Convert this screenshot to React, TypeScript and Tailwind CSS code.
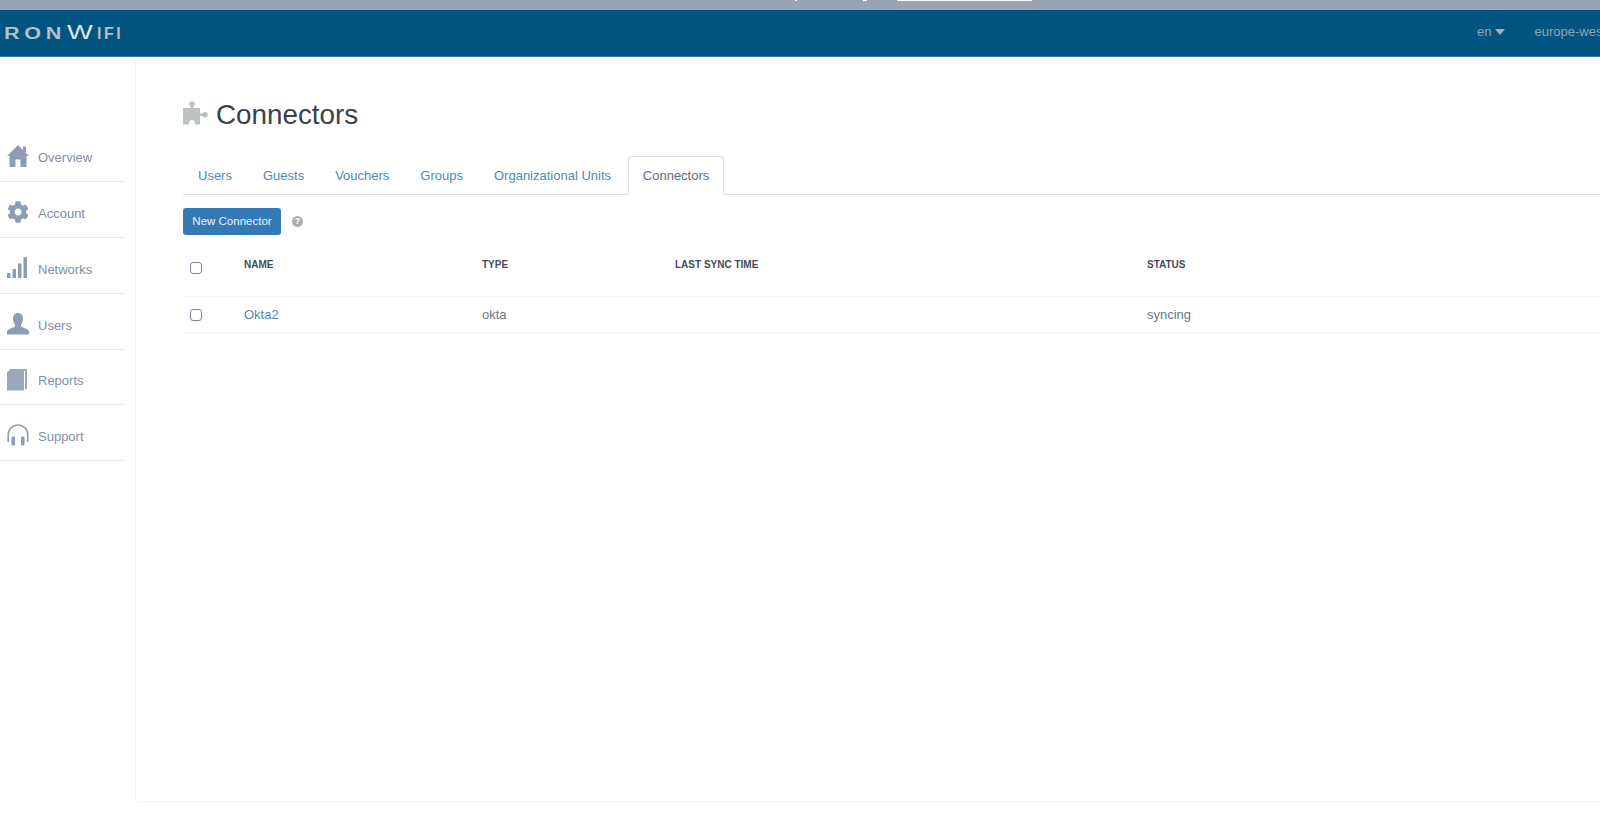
import React from "react";
import { FaCog } from "react-icons/fa";

const font = { fontFamily: '"Liberation Sans", Arial, sans-serif' };

function Home() {
  return (
    <svg viewBox="0 0 22 22" className="h-[22px] w-[22px]" fill="#8e9db3">
      <path d="M11 0 L22 11 L19.5 11 L19.5 22 L13.5 22 L13.5 14.5 L8.5 14.5 L8.5 22 L2.5 22 L2.5 11 L0 11 Z" />
      <rect x="16" y="1.5" width="3" height="6" />
    </svg>
  );
}
function Signal() {
  return (
    <svg viewBox="0 0 20 22" className="h-[22px] w-[20px]" fill="#8e9db3">
      <rect x="0" y="16" width="3.5" height="5" />
      <rect x="5.5" y="12" width="3.5" height="9" />
      <rect x="11" y="6.5" width="3.5" height="14.5" />
      <rect x="16.5" y="0" width="3.5" height="21" />
    </svg>
  );
}
function User() {
  return (
    <svg viewBox="0 0 22 22" className="h-[22px] w-[22px]" fill="#8e9db3">
      <path d="M11 0 C7.6 0 6 2.6 6 5.6 C6 8.2 6.9 10.4 8 11.6 L8 13.4 C6 14.8 1 15.6 0 18.2 L0 21.5 L22 21.5 L22 18.2 C21 15.6 16 14.8 14 13.4 L14 11.6 C15.1 10.4 16 8.2 16 5.6 C16 2.6 14.4 0 11 0 Z" />
    </svg>
  );
}
function Book() {
  return (
    <svg viewBox="0 0 20 22" className="h-[22px] w-[20px]" fill="#9aa8bb">
      <path d="M2.5 0 L20 0 L20 19 L18 21 L18 2 L2.5 2 Z" />
      <path d="M0 3 L2 1.5 L17 1.5 L17 21.5 L0 21.5 Z" />
    </svg>
  );
}
function Headphones() {
  return (
    <svg viewBox="0 0 22 22" className="h-[22px] w-[22px]" fill="none">
      <path d="M1.2 18 L1.2 11 C1.2 5 5.5 1 11 1 C16.5 1 20.8 5 20.8 11 L20.8 18" stroke="#8e9db3" strokeWidth="1.6" />
      <rect x="4.5" y="12.5" width="3.5" height="9" rx="1" fill="#8e9db3" />
      <rect x="14" y="12.5" width="3.5" height="9" rx="1" fill="#8e9db3" />
    </svg>
  );
}
function Puzzle() {
  return (
    <svg viewBox="0 0 25 25" className="mb-[3px] h-[25px] w-[25px] shrink-0" fill="#bcc2c4">
      <circle cx="9" cy="3" r="2.8" />
      <rect x="7.5" y="4" width="3" height="4" />
      <path d="M0 7 L17 7 L17 12.5 L21 12.5 L21 15 L17 15 L17 23.5 L11.5 23.5 C12.5 21.5 11.5 19 9 19 C6.5 19 5.5 21.5 6.5 23.5 L0 23.5 Z" />
      <circle cx="22" cy="13.8" r="2.8" />
    </svg>
  );
}

const nav: [string, React.ReactNode][] = [
  ["Overview", <Home />],
  ["Account", <FaCog className="h-[22px] w-[22px] text-[#8e9db3]" />],
  ["Networks", <Signal />],
  ["Users", <User />],
  ["Reports", <Book />],
  ["Support", <Headphones />],
];

const tabs = ["Users", "Guests", "Vouchers", "Groups", "Organizational Units"];

function Check() {
  return <span className="ml-[7px] block h-3 w-3 rounded-[3px] border border-[#76869c] bg-white" />;
}

export default function App() {
  return (
    <div className="h-[829px] w-[1600px] overflow-hidden bg-white" style={font}>
      <div className="flex h-[10px] items-start bg-[#98a4b6]">
        <span className="ml-[795px] h-px w-[2px] bg-white" />
        <span className="ml-[66px] h-px w-[4px] bg-white" />
        <span className="ml-[30px] h-px w-[135px] bg-white" />
      </div>
      <header className="flex h-[47px] items-center border-b border-[#3b7ea3] bg-[#00547f] pb-[3px]">
        <div className="ml-[4px] flex w-[130px] items-baseline text-[#b4bfc9]">
          <span className="w-[63px] origin-left scale-x-[1.35] whitespace-nowrap text-[16px] font-bold leading-none tracking-[3.5px]">RON</span>
          <span className="w-[30px] origin-left scale-x-[1.3] text-[21px] leading-none text-[#dfe6ec]">W</span>
          <span className="text-[16px] font-bold leading-none tracking-[2.5px]">IFI</span>
        </div>
        <div className="ml-auto flex w-[123px] shrink-0 items-center overflow-hidden text-[13px] text-[#8fa5ba]">
          <span>en</span>
          <span className="ml-[4px] h-0 w-0 border-x-[5px] border-t-[6px] border-x-transparent border-t-[#9fb0c1]" />
          <span className="ml-[29px] whitespace-nowrap">europe-west</span>
        </div>
      </header>
      <div className="flex h-[772px]">
        <aside className="w-[135px] shrink-0 pt-[69.5px]">
          {nav.map(([label, icon]) => (
            <div
              key={label}
              className="flex h-[55.8px] w-[125px] items-center border-b border-[#e3e7ee] pt-[5px] text-[13px] text-[#7f8ea3]"
            >
              <span className="ml-[7px] flex w-[31px] shrink-0">{icon}</span>
              <span className="mt-[3px]">{label}</span>
            </div>
          ))}
        </aside>
        <main className="mt-[3px] h-[742px] flex-1 rounded-bl-[4px] border-b border-l border-[#f1f2f4] pl-[47px]">
          <div className="flex items-center pt-[38px]">
            <Puzzle />
            <h1 className="ml-[8px] text-[27.8px] leading-[34px] text-[#3a414b]">Connectors</h1>
          </div>
          <div className="mt-[25px] flex h-[38px] items-end border-b border-[#dde1e5] pl-[15px] text-[13px] text-[#5188b5]">
            {tabs.map((t, i) => (
              <span key={t} className={`mb-[10px] leading-[16px] ${["mr-[31px]", "mr-[31px]", "mr-[31px]", "mr-[31px]", "mr-[17px]"][i]}`}>
                {t}
              </span>
            ))}
            <span className="-mb-px flex h-[39px] w-[96px] items-start justify-center rounded-t-[4px] border border-b-white border-[#dde1e5] bg-white pt-[11px] leading-[16px] text-[#5f6e80]">
              Connectors
            </span>
          </div>
          <div className="mt-[13px] flex items-center">
            <button className="h-[27px] w-[98px] rounded-[3px] bg-[#337ab7] pt-px text-center text-[11.5px] text-[#eef4f9]">
              New Connector
            </button>
            <span className="ml-[11px] flex h-[11px] w-[11px] items-center justify-center rounded-full bg-[#aaaeb2] text-[9px] font-bold leading-none text-white">
              ?
            </span>
          </div>
          <table className="w-full table-fixed border-collapse">
            <colgroup>
              <col className="w-[61px]" />
              <col className="w-[238px]" />
              <col className="w-[193px]" />
              <col className="w-[472px]" />
              <col />
            </colgroup>
            <thead>
              <tr className="h-[61px] border-b border-[#f1f2f4] text-left text-[10px] font-bold text-[#454c56]">
                <th className="pt-[6px]"><Check /></th>
                <th className="pb-[2px] font-bold">NAME</th>
                <th className="pb-[2px] font-bold">TYPE</th>
                <th className="pb-[2px] font-bold">LAST SYNC TIME</th>
                <th className="pb-[2px] font-bold">STATUS</th>
              </tr>
            </thead>
            <tbody>
              <tr className="h-[36px] border-b border-[#f1f2f4] text-[13px] text-[#6b7788]">
                <td className="pt-px"><Check /></td>
                <td className="pt-px text-[#5188b5]">Okta2</td>
                <td className="pt-px">okta</td>
                <td></td>
                <td className="pt-px">syncing</td>
              </tr>
            </tbody>
          </table>
        </main>
      </div>
    </div>
  );
}
